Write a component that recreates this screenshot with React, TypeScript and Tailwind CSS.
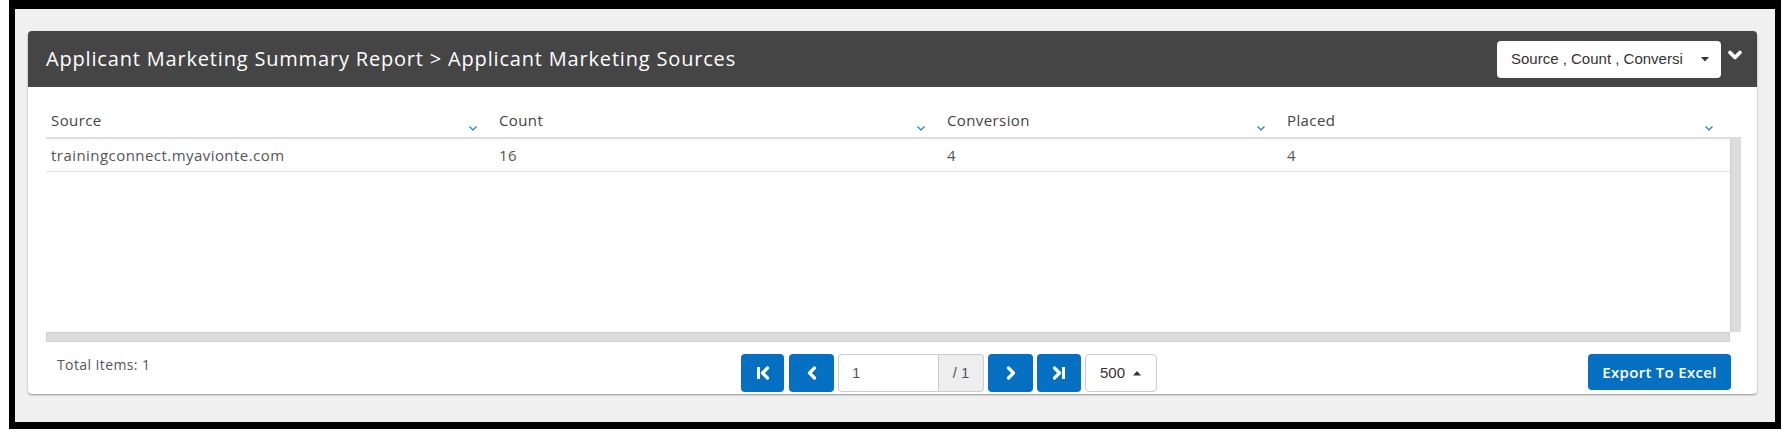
import React from "react";

const SortIcon = () => (
  <svg width="10" height="7" viewBox="0 0 10 7" className="mt-[16px]">
    <polyline points="1.5,1.5 5,5 8.5,1.5" fill="none" stroke="#1c79cc" strokeWidth="1.2" />
  </svg>
);

const cols = [
  { name: "Source", w: "w-[448px]", val: "trainingconnect.myavionte.com" },
  { name: "Count", w: "w-[448px]", val: "16" },
  { name: "Conversion", w: "w-[340px]", val: "4" },
  { name: "Placed", w: "w-[448px]", val: "4" },
];

const BlueBtn = ({ w, children }: { w: string; children: React.ReactNode }) => (
  <div className={`${w} h-[38px] rounded-[4px] bg-[#0570c2] flex items-center justify-center`}>{children}</div>
);

export default function App() {
  return (
    <div className="w-[1788px] h-[436px] bg-white [font-family:'Open_Sans',sans-serif]">
      <div className="ml-[9px] w-[1772px] h-[429px] border-black border-x-[6px] border-t-[9px] border-b-[7px] bg-[#f0f0f0] pt-[22px] pl-[13px]">
        <div className="w-[1729px] h-[363px] bg-white rounded-[4px] shadow-[0_1px_2px_rgba(0,0,0,0.4)] flex flex-col">
          {/* header */}
          <div className="h-[56px] bg-[#454545] rounded-t-[4px] flex items-center pl-[18px] pr-[15px]">
            <div className="text-white text-[20px] tracking-[0.82px] whitespace-nowrap">
              Applicant Marketing Summary Report &gt; Applicant Marketing Sources
            </div>
            <div className="ml-auto w-[224px] h-[37px] bg-white rounded-[4px] flex items-center pl-[14px] pr-[12px] text-[15px] text-[#333] [font-family:'Liberation_Sans',Arial,sans-serif]">
              <span className="whitespace-nowrap">Source , Count , Conversi</span>
              <svg width="8" height="5" viewBox="0 0 8 5" className="ml-auto">
                <polygon points="0,0 8,0 4,4.5" fill="#333" />
              </svg>
            </div>
            <svg width="14" height="11" viewBox="0 0 14 11" className="ml-[7px] mb-[7px]">
              <polyline points="2,2.5 7,7.5 12,2.5" fill="none" stroke="#fff" strokeWidth="3.6" strokeLinecap="round" strokeLinejoin="round" />
            </svg>
          </div>
          {/* body */}
          <div className="pl-[18px] pr-[16px] pt-[14px]">
            <div className="flex h-[38px] border-b-2 border-[#dddddd]">
              {cols.map((c) => (
                <div key={c.name} className={`${c.w} flex items-center justify-between pl-[5px] pr-[16px] pt-[2px] text-[15px] tracking-[0.4px] text-[#444]`}>
                  <span>{c.name}</span>
                  <SortIcon />
                </div>
              ))}
              <div className="w-[11px]" />
            </div>
            <div className="flex h-[193px]">
              <div className="w-[1684px]">
                <div className="flex h-[33px] border-b border-[#e2e2e2]">
                  {cols.map((c) => (
                    <div key={c.name} className={`${c.w} flex items-center pl-[5px] text-[15px] tracking-[0.45px] text-[#555]`}>
                      {c.val}
                    </div>
                  ))}
                </div>
              </div>
              <div className="w-[11px] bg-[#dcdcdc] border-l border-[#cfcfcf]" />
            </div>
            <div className="w-[1684px] h-[10px] bg-[#dcdcdc] border border-[#cfcfcf]" />
          </div>
          {/* footer */}
          <div className="flex items-start pt-[12px] pl-[29px] pr-[26px]">
            <div className="w-[684px] text-[14px] tracking-[0.4px] text-[#555]">Total Items: 1</div>
            <div className="flex">
              <BlueBtn w="w-[43px]">
                <svg width="14" height="14" viewBox="0 0 14 14">
                  <rect x="1" y="1" width="3" height="12" fill="#fff" />
                  <polyline points="11.5,2 6.5,7 11.5,12" fill="none" stroke="#fff" strokeWidth="3.2" strokeLinejoin="round" strokeLinecap="round" />
                </svg>
              </BlueBtn>
              <div className="ml-[5px]">
                <BlueBtn w="w-[45px]">
                  <svg width="12" height="14" viewBox="0 0 12 14">
                    <polyline points="8.5,2 3.5,7 8.5,12" fill="none" stroke="#fff" strokeWidth="3.2" strokeLinejoin="round" strokeLinecap="round" />
                  </svg>
                </BlueBtn>
              </div>
              <div className="ml-[4px] flex h-[38px] text-[15px] [font-family:'Liberation_Sans',Arial,sans-serif]">
                <div className="w-[101px] h-full border border-[#cccccc] rounded-l-[4px] bg-white flex items-center pl-[13px] text-[#555]">
                  1
                </div>
                <div className="w-[45px] h-full border border-l-0 border-[#cccccc] rounded-r-[4px] bg-[#eeeeee] flex items-center justify-center text-[#555]">
                  / 1
                </div>
              </div>
              <div className="ml-[4px]">
                <BlueBtn w="w-[45px]">
                  <svg width="12" height="14" viewBox="0 0 12 14">
                    <polyline points="3.5,2 8.5,7 3.5,12" fill="none" stroke="#fff" strokeWidth="3.2" strokeLinejoin="round" strokeLinecap="round" />
                  </svg>
                </BlueBtn>
              </div>
              <div className="ml-[4px]">
                <BlueBtn w="w-[44px]">
                  <svg width="14" height="14" viewBox="0 0 14 14">
                    <polyline points="2.5,2 7.5,7 2.5,12" fill="none" stroke="#fff" strokeWidth="3.2" strokeLinejoin="round" strokeLinecap="round" />
                    <rect x="10" y="1" width="3" height="12" fill="#fff" />
                  </svg>
                </BlueBtn>
              </div>
              <div className="ml-[4px] w-[72px] h-[38px] border border-[#cccccc] rounded-[4px] bg-white flex items-center pl-[14px] text-[15px] text-[#333] [font-family:'Liberation_Sans',Arial,sans-serif]">
                500
                <svg width="8" height="5" viewBox="0 0 8 5" className="ml-[8px]">
                  <polygon points="0,4.5 8,4.5 4,0" fill="#333" />
                </svg>
              </div>
            </div>
            <div className="ml-auto w-[143px] h-[36px] rounded-[4px] bg-[#0570c2] flex items-center justify-center text-white text-[15px] tracking-[0.3px] font-semibold">
              Export To Excel
            </div>
          </div>
        </div>
      </div>
    </div>
  );
}
